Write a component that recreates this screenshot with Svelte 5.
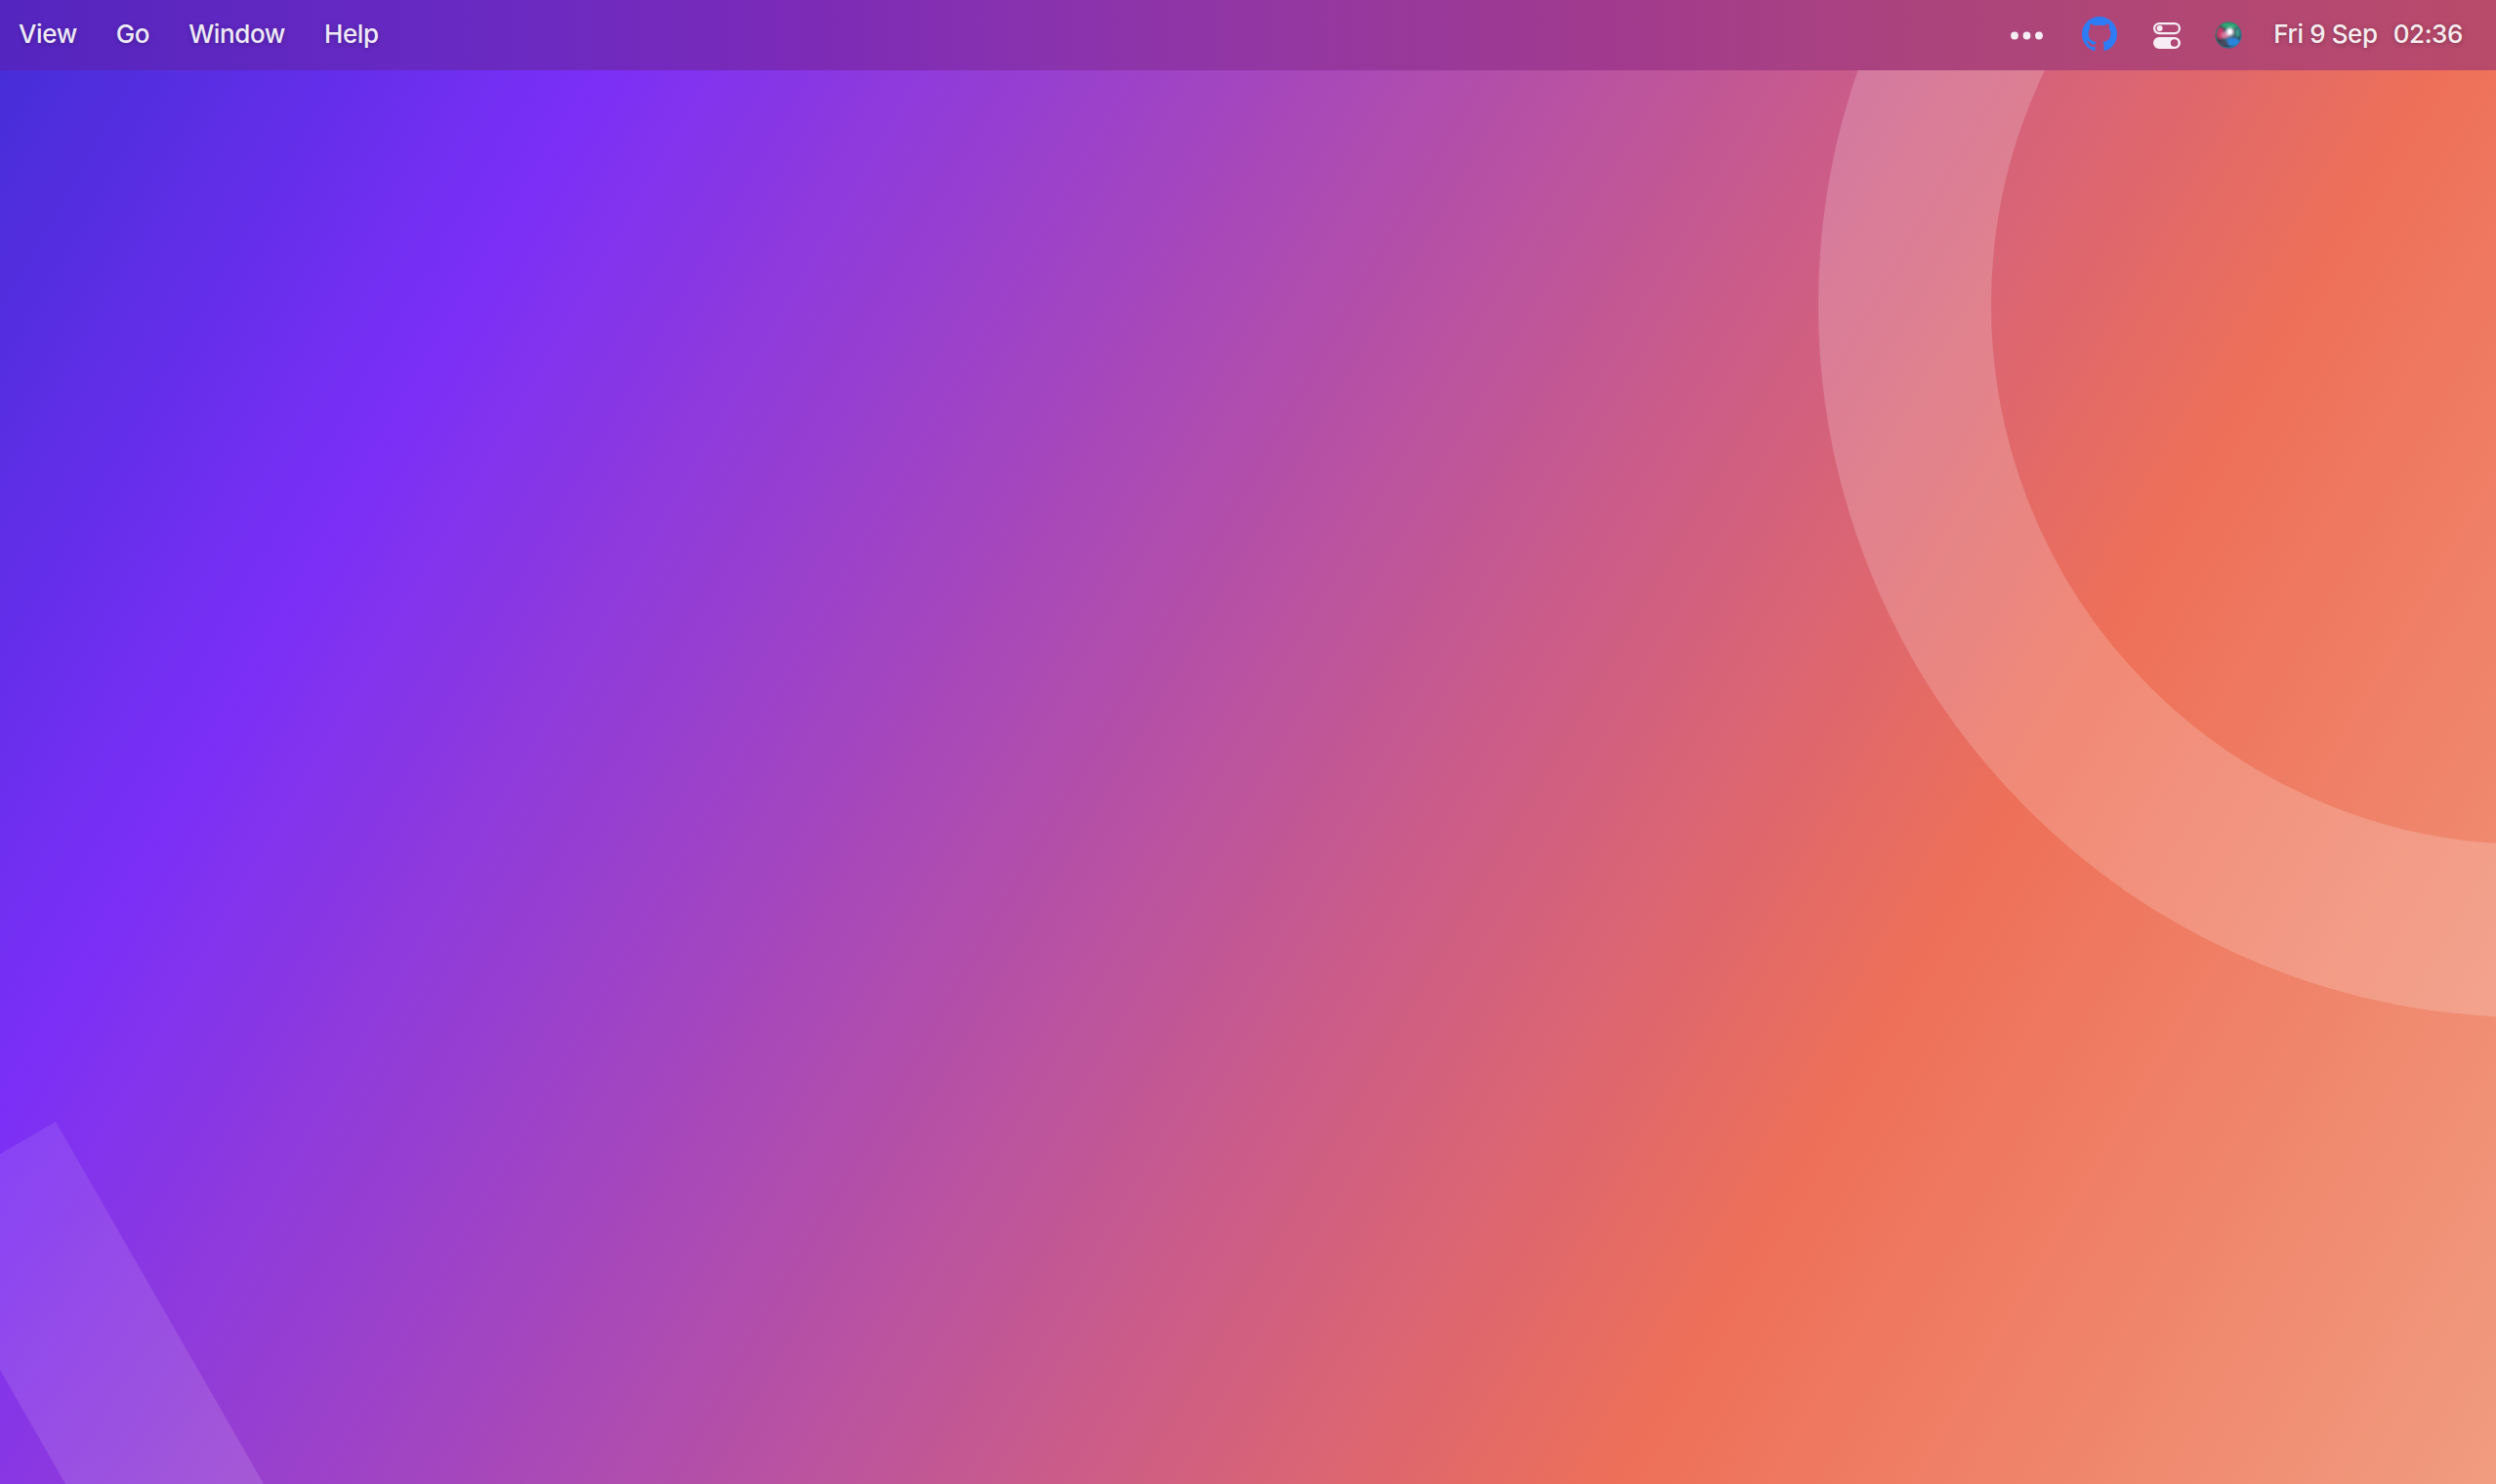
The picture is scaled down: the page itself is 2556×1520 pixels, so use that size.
<script>
  const menus = ['View', 'Go', 'Window', 'Help'];
</script>

<div class="desktop">
  <svg class="art" viewBox="0 0 2556 1520" aria-hidden="true">
    <defs>
      <linearGradient id="band" gradientUnits="userSpaceOnUse" x1="0" y1="1150" x2="270" y2="1520">
        <stop offset="0" stop-color="#fff" stop-opacity=".09" />
        <stop offset="1" stop-color="#fff" stop-opacity=".13" />
      </linearGradient>
    </defs>
    <circle class="ring" cx="2592" cy="312" r="641.5" />
    <polygon points="57,1149 270,1520 67,1520 0,1403 0,1182" fill="url(#band)" />
  </svg>

  <header class="bar">
    <nav class="menus">
      {#each menus as m}
        <span>{m}</span>
      {/each}
    </nav>
    <div class="status">
      <svg class="dots" viewBox="0 0 33 9" aria-hidden="true">
        <circle cx="4" cy="4.5" r="3.9" />
        <circle cx="16.5" cy="4.5" r="3.9" />
        <circle cx="29" cy="4.5" r="3.9" />
      </svg>
      <svg class="gh" viewBox="0 0 16 16" aria-hidden="true">
        <path d="M8 0C3.58 0 0 3.58 0 8c0 3.54 2.29 6.53 5.47 7.59.4.07.55-.17.55-.38 0-.19-.01-.82-.01-1.49-2.01.37-2.53-.49-2.69-.94-.09-.23-.48-.94-.82-1.13-.28-.15-.68-.52-.01-.53.63-.01 1.08.58 1.23.82.72 1.21 1.87.87 2.33.66.07-.52.28-.87.51-1.07-1.78-.2-3.64-.89-3.64-3.95 0-.87.31-1.59.82-2.15-.08-.2-.36-1.02.08-2.12 0 0 .67-.21 2.2.82.64-.18 1.32-.27 2-.27.68 0 1.36.09 2 .27 1.53-1.04 2.2-.82 2.2-.82.44 1.1.16 1.92.08 2.12.51.56.82 1.27.82 2.15 0 3.07-1.87 3.75-3.65 3.95.29.25.54.73.54 1.48 0 1.07-.01 1.93-.01 2.2 0 .21.15.46.55.38A8.013 8.013 0 0016 8c0-4.42-3.58-8-8-8z" />
      </svg>
      <svg class="ctl" viewBox="0 0 28 27" aria-hidden="true">
        <rect x="1.1" y="1.1" width="25.8" height="10" rx="5" fill="none" stroke="#f6eef4" stroke-width="2.2" />
        <circle cx="6.6" cy="6.1" r="3" fill="#f6eef4" />
        <path fill-rule="evenodd" fill="#f6eef4" d="M6 15h16a6 6 0 0 1 0 12H6a6 6 0 0 1 0-12zM21.6 17.2a3.8 3.8 0 1 0 0 7.6a3.8 3.8 0 0 0 0-7.6z" />
      </svg>
      <svg class="siri" viewBox="0 0 56 56" aria-hidden="true">
        <defs>
          <radialGradient id="s-base" cx=".5" cy=".5" r=".5">
            <stop offset="0" stop-color="#5a6a80" />
            <stop offset=".8" stop-color="#2f3f4c" />
            <stop offset="1" stop-color="#3a4a50" />
          </radialGradient>
          <linearGradient id="s-rim" x1="0" y1="0" x2="1" y2="1">
            <stop offset="0" stop-color="#30a070" />
            <stop offset=".5" stop-color="#3a7a80" />
            <stop offset="1" stop-color="#2890d8" />
          </linearGradient>
          <filter id="s-b" x="-30%" y="-30%" width="160%" height="160%"><feGaussianBlur stdDeviation="2.4" /></filter>
          <filter id="s-c" x="-50%" y="-50%" width="200%" height="200%"><feGaussianBlur stdDeviation="3.4" /></filter>
          <clipPath id="s-clip"><circle cx="28" cy="28" r="27" /></clipPath>
        </defs>
        <circle cx="28" cy="28" r="27" fill="url(#s-base)" />
        <g clip-path="url(#s-clip)">
          <ellipse cx="32" cy="8" rx="20" ry="7" fill="#2fa878" filter="url(#s-b)" />
          <ellipse cx="47" cy="23" rx="5" ry="10" fill="#3a9a8a" filter="url(#s-b)" />
          <ellipse cx="11" cy="24" rx="8" ry="13" fill="#c83a6a" filter="url(#s-b)" />
          <ellipse cx="21" cy="28" rx="8" ry="7" fill="#d87aa0" filter="url(#s-b)" />
          <ellipse cx="37" cy="42" rx="15" ry="9" fill="#2a86dc" filter="url(#s-b)" />
          <ellipse cx="31" cy="21" rx="7.5" ry="8" fill="#fff" filter="url(#s-c)" />
          <ellipse cx="31" cy="21" rx="3.5" ry="4.5" fill="#fff" />
          <ellipse cx="18" cy="45" rx="9" ry="5" fill="#4a4a60" filter="url(#s-b)" />
        </g>
        <circle cx="28" cy="28" r="26.2" fill="none" stroke="url(#s-rim)" stroke-width="1.6" />
      </svg>
      <time>
        <span>Fri 9 Sep</span>
        <span>02:36</span>
      </time>
    </div>
  </header>
</div>

<style>
  :global(body) {
    margin: 0;
  }
  .desktop {
    position: relative;
    width: 2556px;
    height: 1520px;
    overflow: hidden;
    background: linear-gradient(120deg, #432dd6 0%, #7b2ff7 19%, #ee7058 74%, #f19c80 100%);
    font-family: Inter, "Liberation Sans", sans-serif;
  }
  .art {
    position: absolute;
    inset: 0;
    width: 100%;
    height: 100%;
  }
  .ring {
    fill: none;
    stroke: #fff;
    stroke-opacity: 0.19;
    stroke-width: 177;
  }
  .bar {
    position: relative;
    height: 72px;
    box-sizing: border-box;
    display: flex;
    align-items: center;
    justify-content: space-between;
    padding: 0 34px 2px 19px;
    background: linear-gradient(90deg, #5525bf 0%, #6a2ac2 20%, #7a2ab8 31%, #8b33ad 43%, #96389c 55%, #a33b8c 66%, #ac447c 78%, #b84a6a 100%);
    color: rgba(255, 255, 255, 0.92);
    font-size: 26px;
    font-weight: 500;
    letter-spacing: -0.4px;
    line-height: 30px;
    text-shadow: 0 1px 5px rgba(0, 0, 0, 0.25);
  }
  .menus {
    display: flex;
    gap: 40px;
  }
  .status {
    display: flex;
    align-items: center;
  }
  .dots {
    width: 33px;
    height: 9px;
    fill: #f6eef4;
    margin: 2px 0 0 0;
  }
  .gh {
    width: 36px;
    height: 36px;
    fill: #2d7cf6;
    margin: 0 0 0 40px;
  }
  .ctl {
    width: 28px;
    height: 27px;
    margin: 2px 0 0 37px;
  }
  .siri {
    width: 28px;
    height: 28px;
    margin: 2px 0 0 35px;
  }
  time {
    display: flex;
    gap: 16px;
    margin: 0 0 0 32px;
  }
</style>
